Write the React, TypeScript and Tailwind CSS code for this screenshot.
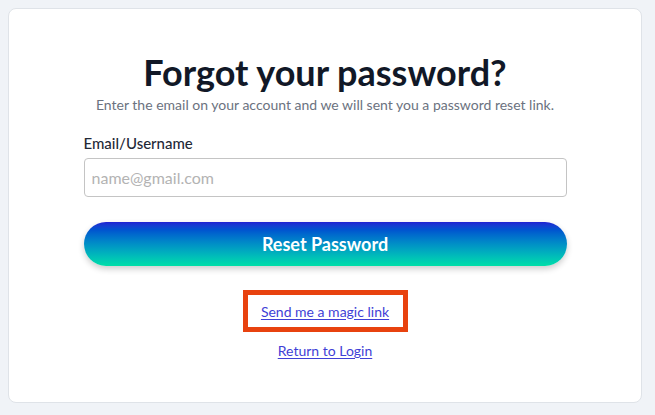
export default function App() {
    return (
        <div className="min-h-screen bg-[#f0f3f7] pt-[8px] pl-[8px] pr-[13px] pb-[13px] font-['Lato',sans-serif]">
            <div className="flex flex-col items-center h-[395px] bg-white border border-[#dfe3e8] rounded-lg pt-[43px]">
                <h1 className="text-[36px] leading-[40px] font-bold text-[#111827]">Forgot your password?</h1>
                <p className="mt-[4px] text-[14px] leading-[18px] text-[#6b7280]">
                    Enter the email on your account and we will sent you a password reset link.
                </p>
                <div className="w-[483px] mt-[19px] flex flex-col">
                    <label className="text-[15px] leading-[20px] font-medium text-[#1f2937]">Email/Username</label>
                    <input
                        type="text"
                        placeholder="name@gmail.com"
                        className="mt-[5px] h-[39px] px-[7px] border border-[#c4c4c4] rounded-[4px] text-[16px] outline-none placeholder:text-[#b3b3b3]"
                    />
                    <button className="mt-[25px] h-[44px] rounded-full bg-gradient-to-b from-[#2020d2] to-[#00dfa8] text-white text-[18px] font-bold shadow-[0_3px_6px_rgba(0,0,0,0.2)]">
                        Reset Password
                    </button>
                </div>
                <div className="mt-[24px] w-[165px] h-[42px] border-[5px] border-[#e8420f] flex items-center justify-center">
                    <a href="#" className="text-[14px] text-[#3f3fd6] underline underline-offset-2">Send me a magic link</a>
                </div>
                <a href="#" className="mt-[10px] text-[14px] leading-[18px] text-[#3f3fd6] underline underline-offset-2">Return to Login</a>
            </div>
        </div>
    );
}
